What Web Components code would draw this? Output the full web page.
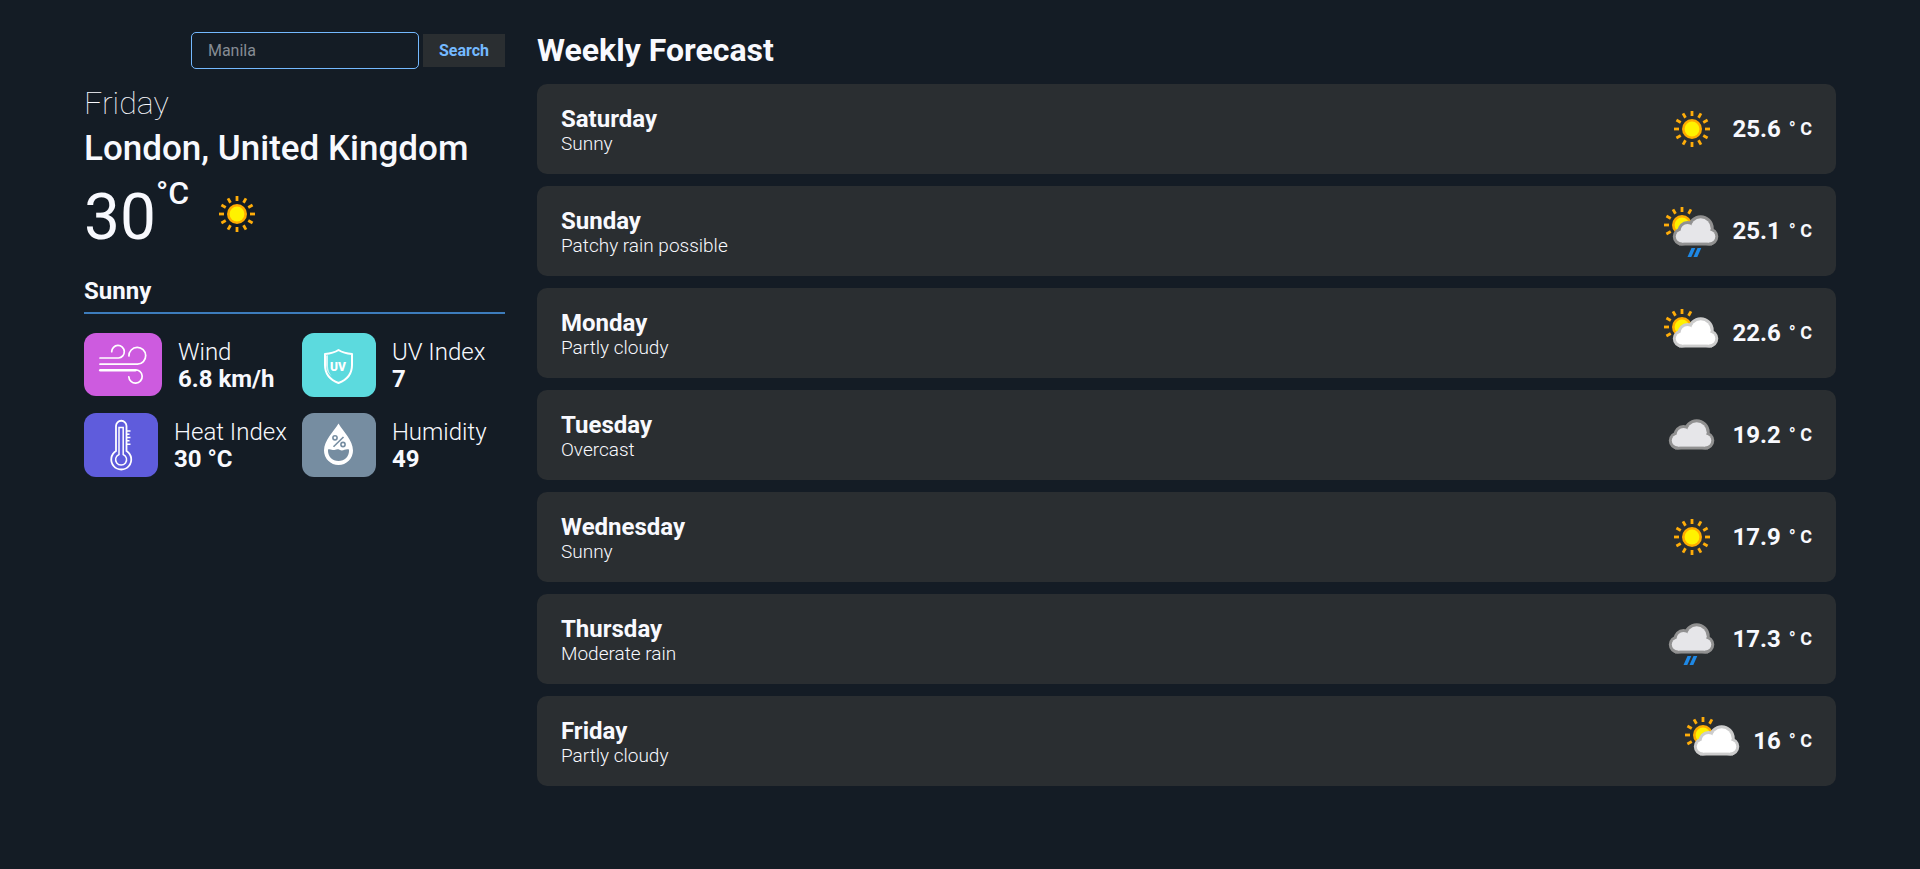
<!DOCTYPE html>
<html lang="en">
<head>
<meta charset="utf-8">
<meta name="viewport" content="width=device-width, initial-scale=1">
<title>Weather</title>
<style>
  html { background: #141c25; }
  body { margin: 0; font-family: Roboto, sans-serif; color: #f8f9fe; }
</style>
</head>
<body>
<weather-app></weather-app>

<script>
const define = (name, html, setup) => {
  const template = document.createElement('template');
  template.innerHTML = html;
  customElements.define(name, class extends HTMLElement {
    constructor() {
      super();
      this.attachShadow({ mode: 'open' }).append(template.content.cloneNode(true));
    }
    connectedCallback() { if (setup) setup(this, this.shadowRoot); }
  });
};

// Weather icons, drawn on a 64 x 64 canvas.
const sun = (cx, cy, angles) => {
  const rays = angles.map(a =>
    `<path d="M${cx} ${cy - 13}v-5" transform="rotate(${a} ${cx} ${cy})"/>`).join('');
  return `<g stroke="#ffad0a" stroke-width="2.8" fill="none">${rays}</g>
    <circle cx="${cx}" cy="${cy}" r="10" fill="#ffab00"/>
    <circle cx="${cx}" cy="${cy}" r="7.4" fill="#fff200"/>`;
};
const cloud = (dx, edge, fill) => {
  const puffs = `<circle cx="40.7" cy="29.3" r="10"/><circle cx="27.5" cy="32" r="7"/>
    <circle cx="21.8" cy="37.6" r="6"/><circle cx="49.3" cy="37.6" r="6"/>
    <path d="M22 34h27v9.6h-27z"/>`;
  return `<g transform="translate(${dx} 0)"><g fill="${edge}" stroke="${edge}" stroke-width="6">${puffs}</g>
    <g fill="${fill}">${puffs}</g></g>`;
};
const rain = dx => `<path transform="translate(${dx} 0)" fill="#1e88e5"
    d="M31.5 49h3.8l-4 9h-3.8zM37.5 49h3.8l-4 9h-3.8z"/>`;
const allRays = [0, 30, 60, 90, 120, 150, 180, 210, 240, 270, 300, 330];
const sideRays = [240, 270, 300, 330, 0, 30];
const skies = {
  'sunny': sun(32, 32, allRays),
  'partly-cloudy': sun(22, 26, sideRays) + cloud(0, '#cccccc', '#ffffff'),
  'patchy-rain': sun(22, 26, sideRays) + cloud(0, '#919191', '#e6e6e9') + rain(0),
  'overcast': cloud(-4, '#919191', '#e6e6e9'),
  'rain': cloud(-4, '#919191', '#e6e6e9') + rain(-4),
};

define('sky-icon', `
  <style>
    :host { display: block; flex: none; width: 64px; height: 64px; }
    svg { display: block; width: 100%; height: 100%; }
  </style>
  <svg viewBox="0 0 64 64" aria-hidden="true"></svg>`,
  (host, root) => { root.querySelector('svg').innerHTML = skies[host.getAttribute('sky')]; });

define('city-search', `
  <style>
    :host { display: block; }
    form { display: flex; justify-content: flex-end; align-items: center; gap: 4px; }
    input, button { box-sizing: border-box; font: inherit; font-size: 16px; }
    input {
      width: 228px; height: 37px; padding: 0 16px; color: inherit; background: transparent;
      border: 1px solid #74b9ff; border-radius: 5px; outline: none;
    }
    input::placeholder { color: #868c94; opacity: 1; }
    button {
      height: 33px; padding: 0 16px; border: 0; background: #2a2e31; color: #74b9ff;
      font-weight: 700; cursor: pointer;
    }
  </style>
  <form>
    <input type="text" placeholder="Manila" aria-label="City">
    <button type="submit">Search</button>
  </form>`,
  (host, root) => root.querySelector('form').addEventListener('submit', e => e.preventDefault()));

define('current-weather', `
  <style>
    :host { display: block; }
    p, h1, h2 { margin: 0; }
    .day { font-size: 32px; font-weight: 100; line-height: 38px; }
    h1 { margin-top: 6px; font-size: 35px; font-weight: 500; line-height: 42px; }
    .reading { display: flex; align-items: center; margin-top: 3px; }
    .value { padding-top: 8px; font-size: 64px; line-height: 74px; }
    .unit { align-self: flex-start; font-size: 32px; font-weight: 500; line-height: 40px; }
    sky-icon { margin-left: 16px; }
    h2 {
      margin-top: 22px; padding-bottom: 7px; border-bottom: 2px solid #3d7cbc;
      font-size: 24px; font-weight: 700; line-height: 28px;
    }
  </style>
  <p class="day"><slot name="day"></slot></p>
  <h1><slot name="place"></slot></h1>
  <div class="reading">
    <span class="value"><slot name="value"></slot></span>
    <span class="unit">°C</span>
    <sky-icon sky="sunny"></sky-icon>
  </div>
  <h2><slot name="condition"></slot></h2>`);

const metrics = {
  wind: { color: '#cd5bdf', width: 78, height: 63, art: `
    <g fill="none" stroke="#fff" stroke-width="1.7" stroke-linecap="round">
      <path d="M16 25h18.500a6.300 6.300 0 1 0-6.800-6.300"/>
      <path d="M16 31.200h37.500a8.400 8.400 0 1 0-8.600-8.200"/>
      <path stroke-width="2.6" d="M16.300 37.300h35"/>
      <path d="M51 36.800a6.700 6.700 0 1 1-6.200 7"/>
    </g>` },
  uv: { color: '#5cdade', width: 74, height: 64, art: `
    <path fill="none" stroke="#fff" stroke-width="2" stroke-linejoin="round"
      d="M36.500 17c4 2.600 8.500 3.600 13.500 4v11c0 9-5.500 15-13.500 18-8-3-13.500-9-13.500-18V21c5-.4 9.500-1.400 13.500-4z"/>
    <path fill="#d5f6f7" d="M24 22.500l2-.3v11c0 4 1.500 7 3.500 10-3.500-3-5.500-7-5.500-11z"/>
    <text x="36" y="38" text-anchor="middle" fill="#fff" font-family="Roboto, sans-serif" font-size="12" font-weight="900">UV</text>` },
  heat: { color: '#5f5cdc', width: 74, height: 64, art: `
    <g fill="none" stroke="#fff" stroke-width="1.5">
      <path stroke-width="1.800" d="M32 38V13a5 5 0 0 1 10.500 0v25a10 10 0 1 1-10.500 0z"/>
      <path d="M35 41.500V14.500h4.200v27a5.500 5.500 0 1 1-4.200 0z"/>
      <path d="M43 18h3.500M43 21.200h2.500M43 24.500h3.500M43 27.700h2.500M43 31.200h3.500"/>
    </g>` },
  humidity: { color: '#768da1', width: 74, height: 64, art: `
    <path fill="#fff" d="M36.500 10.500C41 18 51 27.500 51 37.500a14.500 14.500 0 0 1-29 0C22 27.500 32 18 36.500 10.500z"/>
    <path fill="#768da1" d="M26 36.500c2.500-1 4.500 1 6.500.5s3-1.200 5-.2 3.500.5 5 0 2.700-.8 4.500-.3c.6 7-4.500 11.500-10.500 11.500S25.500 43.500 26 36.500z"/>
    <g fill="none" stroke="#768da1" stroke-width="1.6">
      <circle cx="33" cy="24.800" r="2.100"/><circle cx="41" cy="31.500" r="2.100"/><path d="M41.500 24l-10 9.800"/>
    </g>` },
};

define('weather-metric', `
  <style>
    :host { display: flex; align-items: center; gap: 16px; min-height: 64px; }
    svg { display: block; flex: none; align-self: flex-start; border-radius: 12px; }
    dl { margin: 0; padding-top: 2px; font-size: 24px; line-height: 27px; white-space: nowrap; }
    dt { font-weight: 300; }
    dd { margin: 0; font-weight: 700; }
  </style>
  <svg aria-hidden="true"></svg>
  <dl><dt><slot name="label"></slot></dt><dd><slot></slot></dd></dl>`,
  (host, root) => {
    const m = metrics[host.getAttribute('kind')];
    const svg = root.querySelector('svg');
    svg.setAttribute('width', m.width);
    svg.setAttribute('height', m.height);
    svg.style.background = m.color;
    svg.innerHTML = m.art;
  });

define('forecast-day', `
  <style>
    :host {
      display: flex; align-items: center; gap: 8px; padding: 13px 24px;
      background: #2a2e31; border-radius: 10px;
    }
    .text { flex: 1; min-width: 0; }
    h3, p { margin: 0; }
    h3 { font-size: 24px; font-weight: 700; line-height: 28px; }
    p { font-size: 19px; font-weight: 300; line-height: 21px; }
    .temp { display: flex; align-items: center; gap: 8px; font-size: 24px; font-weight: 700; line-height: 28px; }
    .unit { font-size: 18px; }
  </style>
  <div class="text"><h3><slot name="day"></slot></h3><p><slot name="condition"></slot></p></div>
  <div class="icon"></div>
  <div class="temp"><span><slot name="temp"></slot></span><span class="unit">° C</span></div>`,
  (host, root) => {
    root.querySelector('.icon').innerHTML = `<sky-icon sky="${host.getAttribute('sky')}"></sky-icon>`;
  });

const week = [
  ['Saturday', 'Sunny', 'sunny', '25.6'],
  ['Sunday', 'Patchy rain possible', 'patchy-rain', '25.1'],
  ['Monday', 'Partly cloudy', 'partly-cloudy', '22.6'],
  ['Tuesday', 'Overcast', 'overcast', '19.2'],
  ['Wednesday', 'Sunny', 'sunny', '17.9'],
  ['Thursday', 'Moderate rain', 'rain', '17.3'],
  ['Friday', 'Partly cloudy', 'partly-cloudy', '16'],
];

define('weekly-forecast', `
  <style>
    :host { display: block; }
    h2 { margin: 0 0 15px; font-size: 32px; font-weight: 700; line-height: 37px; }
    .list { display: grid; gap: 12px; }
  </style>
  <h2>Weekly Forecast</h2>
  <div class="list">${week.map(([day, condition, sky, temp]) => `
    <forecast-day sky="${sky}">
      <span slot="day">${day}</span>
      <span slot="condition">${condition}</span>
      <span slot="temp">${temp}</span>
    </forecast-day>`).join('')}
  </div>`);

define('weather-app', `
  <style>
    :host { display: block; }
    main {
      display: grid; grid-template-columns: 421px minmax(0, 1fr); align-items: start;
      gap: 32px; padding: 32px 84px;
    }
    current-weather { margin-top: 15px; }
    .metrics {
      display: grid; grid-template-columns: max-content 1fr; gap: 16px 15px; margin-top: 19px;
    }
    @media (max-width: 1000px) {
      main { grid-template-columns: minmax(0, 1fr); padding: 32px 24px; }
    }
  </style>
  <main>
    <section>
      <city-search></city-search>
      <current-weather>
        <span slot="day">Friday</span>
        <span slot="place">London, United Kingdom</span>
        <span slot="value">30</span>
        <span slot="condition">Sunny</span>
      </current-weather>
      <div class="metrics">
        <weather-metric kind="wind"><span slot="label">Wind</span>6.8 km/h</weather-metric>
        <weather-metric kind="uv"><span slot="label">UV Index</span>7</weather-metric>
        <weather-metric kind="heat"><span slot="label">Heat Index</span>30 °C</weather-metric>
        <weather-metric kind="humidity"><span slot="label">Humidity</span>49</weather-metric>
      </div>
    </section>
    <weekly-forecast></weekly-forecast>
  </main>`);
</script>
</body>
</html>
